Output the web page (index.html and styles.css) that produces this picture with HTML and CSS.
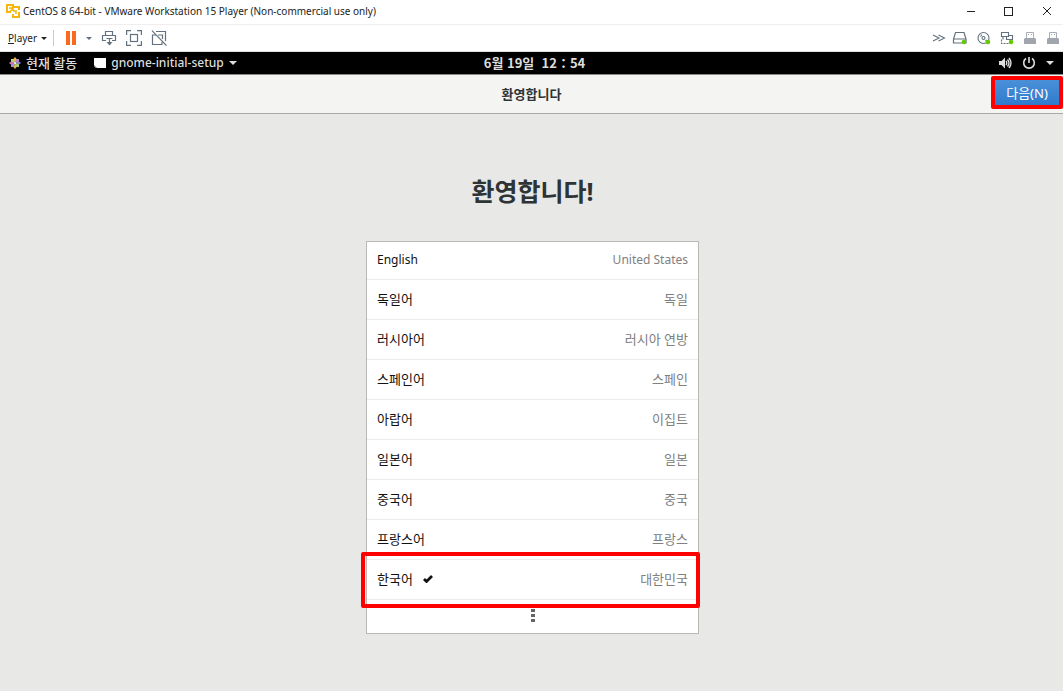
FILE: index.html
```
<!DOCTYPE html>
<html lang="ko">
<head>
  <meta charset="UTF-8" />
  <meta name="viewport" content="width=device-width, initial-scale=1" />
  <title>CentOS 8 64-bit - VMware Workstation 15 Player</title>
  <link rel="stylesheet" href="styles.css">
</head>
<body>
  <header class="titlebar">
    <svg class="app-icon" width="14" height="14" viewBox="0 0 14 14" fill="none" stroke="#f5b70a" stroke-width="2">
      <path d="M5 8H1V1h6v3M8 3h5v3M13 8v5H7v-3"/>
      <path d="M3 4h4v3M3.500 8l4-4M7 7h3v3" stroke-width="1.500"/>
    </svg>
    <span class="window-title">CentOS 8 64-bit - VMware Workstation 15 Player (Non-commercial use only)</span>
    <div class="window-buttons">
      <button aria-label="Minimize"><svg width="10" height="10" viewBox="0 0 10 10"><path d="M1 5.500h8" stroke="#222"/></svg></button>
      <button aria-label="Maximize"><svg width="10" height="10" viewBox="0 0 10 10"><rect x=".5" y="1.500" width="8" height="8" fill="none" stroke="#222"/></svg></button>
      <button aria-label="Close"><svg width="10" height="10" viewBox="0 0 10 10"><path d="M1 1l8 8M9 1L1 9" stroke="#222"/></svg></button>
    </div>
  </header>

  <nav class="toolbar">
    <button class="player-menu"><span><u>P</u>layer</span><i class="caret"></i></button>
    <span class="separator"></span>
    <button class="pause" aria-label="Pause">
      <svg width="12" height="14" viewBox="0 0 12 14"><path d="M1 0h4v14H1zM7 0h4v14H7z" fill="#f9691e"/></svg>
      <i class="caret slate"></i>
    </button>
    <button aria-label="Send Ctrl+Alt+Del">
      <svg width="16" height="16" viewBox="0 0 16 16" fill="none" stroke="#62717d" stroke-width="1.2">
        <path d="M4.500 5.500V1.500h7v4M5 10.500H1.500v-5h13v5H11M5.500 8.500h6M8.500 9v4"/>
        <path d="M5.500 12h6l-3 3.500z" fill="#62717d" stroke="none"/>
      </svg>
    </button>
    <button aria-label="Full screen">
      <svg width="16" height="16" viewBox="0 0 16 16" fill="none" stroke="#62717d" stroke-width="1.2">
        <path d="M.6 5V.6H5M11 .6h4.400V5M15.400 11v4.400H11M5 15.400H.6V11"/><rect x="4.500" y="4.500" width="7" height="7"/>
      </svg>
    </button>
    <button aria-label="Unity">
      <svg width="16" height="16" viewBox="0 0 16 16" fill="none" stroke="#62717d" stroke-width="1.2">
        <path d="M5 1.500h9.500V11M4.500 5H1.500v9.500h9.500V12M7 5h4.500v4M1 .6l14.500 15"/>
      </svg>
    </button>
    <div class="devices">
      <button class="collapse" aria-label="Collapse">
        <svg width="14" height="14" viewBox="0 0 14 14" fill="none" stroke="#62717d" stroke-width="1.1"><path d="M1 4l6 3-6 3M6.500 4l6 3-6 3"/></svg>
      </button>
      <button aria-label="Hard disk">
        <svg width="16" height="14" viewBox="0 0 16 14" fill="none" stroke="#62717d" stroke-width="1.2">
          <path d="M3.500 1.500h8.500l2 6.500v4H1.500V8zM1.500 8h12.500"/><circle cx="12" cy="11" r="2.300" fill="#66c800" stroke="none"/>
        </svg>
      </button>
      <button aria-label="CD/DVD">
        <svg width="14" height="14" viewBox="0 0 14 14" fill="none" stroke="#62717d" stroke-width="1.1">
          <circle cx="6.500" cy="7" r="5.500"/><circle cx="6.500" cy="7" r="1.500"/><path d="M3.500 5.500l1.500-2M8.500 10l1-1"/><circle cx="11" cy="11" r="2.300" fill="#66c800" stroke="none"/>
        </svg>
      </button>
      <button aria-label="Network adapter">
        <svg width="14" height="14" viewBox="0 0 14 14" fill="none" stroke="#62717d" stroke-width="1.1">
          <path d="M1.500 1.500h7v4h-7zM3 5.500v3M6.500 5.500v3h6v-4h-4"/><path d="M1.500 8.500v4h8" stroke-dasharray="2 1"/><circle cx="11" cy="11" r="2.300" fill="#66c800" stroke="none"/>
        </svg>
      </button>
      <button aria-label="USB device 1">
        <svg width="14" height="14" viewBox="0 0 14 14"><path d="M3.500 7V1.500h7V7" fill="#fff" stroke="#a9adb3"/><path d="M5 3h1v1H5zM8 3h1v1H8zM2 7h10l1 1v5H1V8z" fill="#a0a5ae"/></svg>
      </button>
      <button aria-label="USB device 2">
        <svg width="14" height="14" viewBox="0 0 14 14"><path d="M3.500 7V1.500h7V7" fill="#fff" stroke="#a9adb3"/><path d="M5 3h1v1H5zM8 3h1v1H8zM2 7h10l1 1v5H1V8z" fill="#a0a5ae"/></svg>
      </button>
    </div>
  </nav>

  <div class="topbar">
    <div class="topbar-left">
      <button class="activities">
        <svg width="12" height="12" viewBox="0 0 12 12">
          <path d="M6 0l2 2.500L6 6 4 2.500z" fill="#f0b84a"/><path d="M12 6L9.500 8 6 6l3.500-2z" fill="#8f83c8"/>
          <path d="M6 12L4 9.500 6 6l2 3.500z" fill="#e8b04a"/><path d="M0 6l2.500-2L6 6 2.500 8z" fill="#c778b8"/>
          <path d="M2 2h2.500L6 6 2 4.500z" fill="#b9d47c"/><path d="M10 2v2.500L6 6l1.500-4z" fill="#b787c8"/>
          <path d="M10 10H7.500L6 6l4 1.500z" fill="#adcb6b"/><path d="M2 10V7.500L6 6l-1.500 4z" fill="#9599d7"/>
          <circle cx="6" cy="6" r="1" fill="#fff"/>
        </svg>
        현재 활동
      </button>
      <button class="app-menu">
        <svg width="12" height="12" viewBox="0 0 12 12"><path d="M0 1h12v10H2l-2-2z" fill="#fff"/><path d="M0 8l3 3" stroke="#aaa"/></svg>
        gnome-initial-setup
        <i class="caret light"></i>
      </button>
    </div>
    <button class="clock">6월 19일&nbsp; 12：54</button>
    <button class="status-menu" aria-label="System">
      <svg width="14" height="14" viewBox="0 0 14 14" fill="none" stroke="#ddd" stroke-width="1.4">
        <path d="M1 5h2.500L7 1.500v11L3.500 9H1z" fill="#ddd" stroke="none"/><path d="M8 5q1.500 2 0 4M9.500 3.500q3 3.500 0 7M11 2q4 5 0 10"/>
      </svg>
      <svg width="14" height="14" viewBox="0 0 14 14" fill="none" stroke="#ddd" stroke-width="1.600">
        <path d="M4 2.500a5.300 5.300 0 1 0 6 0M7 1v6"/>
      </svg>
      <i class="caret light"></i>
    </button>
  </div>

  <div class="headerbar">
    <span class="headerbar-title">환영합니다</span>
    <div class="next-mark"><button class="next">다음(N)</button></div>
  </div>

  <main class="welcome">
    <h1>환영합니다!</h1>
    <ul class="languages">
      <li><button class="latin"><span>English</span><span class="country">United States</span></button></li>
      <li><button><span>독일어</span><span class="country">독일</span></button></li>
      <li><button><span>러시아어</span><span class="country">러시아 연방</span></button></li>
      <li><button><span>스페인어</span><span class="country">스페인</span></button></li>
      <li><button><span>아랍어</span><span class="country">이집트</span></button></li>
      <li><button><span>일본어</span><span class="country">일본</span></button></li>
      <li><button><span>중국어</span><span class="country">중국</span></button></li>
      <li><button><span>프랑스어</span><span class="country">프랑스</span></button></li>
      <li class="selected">
        <button>
          <span>한국어</span>
          <svg width="10" height="8" viewBox="0 0 10 8"><path d="M1 4l2.500 2.500L9 1" fill="none" stroke="#111" stroke-width="2.800"/></svg>
          <span class="country">대한민국</span>
        </button>
      </li>
      <li class="more">
        <button aria-label="더 보기"><svg width="4" height="14" viewBox="0 0 4 14"><path d="M0 0h4v3H0zM0 5h4v3H0zM0 10h4v3H0z" fill="#666"/></svg></button>
      </li>
    </ul>
  </main>
</body>
</html>
```
FILE: styles.css
```
* {
  box-sizing: border-box;
}
body {
  margin: 0;
  min-height: 100vh;
  display: flex;
  flex-direction: column;
  font-family: "Noto Sans", "Noto Sans CJK KR", sans-serif;
  font-size: 13px;
  line-height: 20px;
  background-color: #e8e8e6;
  color: #2e3436;
}
button {
  display: flex;
  align-items: center;
  padding: 0;
  border: none;
  background: none;
  font: inherit;
  color: inherit;
}
svg {
  display: block;
  flex: none;
}
.caret {
  border: 3px solid transparent;
  border-top-color: #222;
  border-bottom: none;
}
.caret.slate {
  border-top-color: #62717d;
}
.caret.light {
  border-width: 4px;
  border-bottom: none;
  border-top-color: #ddd;
}

/* VMware window */
.titlebar {
  display: flex;
  align-items: center;
  height: 25px;
  padding: 0 11px 2px 6px;
  background-color: #fff;
  border-bottom: 1px solid #eee;
  color: #222;
}
.window-title {
  margin-left: 3px;
  font-size: 10px;
}
.window-buttons {
  display: flex;
  gap: 28px;
  margin-left: auto;
}
.toolbar {
  display: flex;
  align-items: center;
  gap: 9px;
  height: 27px;
  padding: 0 3px 0 8px;
  background-color: #fff;
  border-bottom: 1px solid #ddd;
}
.player-menu {
  gap: 4px;
  font-size: 10px;
  color: #222;
}
.separator {
  width: 1px;
  height: 16px;
  margin-left: -3px;
  background-color: #ccc;
}
.pause {
  gap: 9px;
  margin-left: 2px;
}
.devices {
  display: flex;
  gap: 9px;
  margin-left: auto;
}
.collapse {
  margin-right: -3px;
}

/* GNOME shell */
.topbar {
  display: grid;
  grid-template-columns: 1fr auto 1fr;
  align-items: center;
  height: 22px;
  padding: 0 9px;
  background-color: #000;
  color: #ddd;
  font-weight: 500;
}
.topbar-left {
  display: flex;
  gap: 17px;
}
.activities,
.app-menu {
  gap: 5px;
}
.app-menu {
  font-size: 12px;
}
.clock {
  padding-left: 6px;
  font-family: "Noto Sans CJK KR", sans-serif;
  font-weight: 700;
}
.status-menu {
  justify-self: end;
  gap: 10px;
}
.headerbar {
  display: grid;
  grid-template-columns: 1fr auto 1fr;
  align-items: start;
  height: 40px;
  padding-top: 1px;
  background-color: #f4f4f3;
  border-top: 1px solid #888;
  border-bottom: 1px solid #aaa;
}
.headerbar-title {
  grid-column: 2;
  padding-top: 8px;
  font-weight: 700;
}
.next-mark {
  justify-self: end;
  border: 4px solid #f00;
  border-radius: 2px;
}
.next {
  justify-content: center;
  width: 64px;
  height: 25px;
  background: linear-gradient(#4a90d9, #2f7bcc);
  color: #fff;
}

/* Language page */
.welcome {
  flex: 1;
  padding: 59px 19px 58px 21px;
}
h1 {
  margin: 0 0 32px;
  font-size: 25px;
  line-height: 36px;
  font-weight: 700;
  text-align: center;
}
.languages {
  width: 333px;
  max-width: 100%;
  margin: 0 auto;
  padding: 0;
  list-style: none;
  background-color: #fff;
  border: 1px solid #b8b8b4;
}
.languages li {
  height: 40px;
  border-bottom: 1px solid #ededed;
}
.languages li:first-child {
  height: 38px;
}
.languages button {
  width: 100%;
  height: 100%;
  padding: 0 10px 1px;
  color: #111;
}
.languages .latin {
  font-size: 12px;
}
.languages .country {
  margin-left: auto;
  color: #808080;
}
.languages .selected {
  position: relative;
}
.selected svg {
  margin-left: 10px;
}
.selected::after {
  content: "";
  position: absolute;
  inset: -8px -2px -9px -6px;
  border: 4px solid #f00;
  border-radius: 2px;
}
.languages .more {
  height: 33px;
  border-bottom: none;
}
.more button {
  justify-content: center;
}
```
